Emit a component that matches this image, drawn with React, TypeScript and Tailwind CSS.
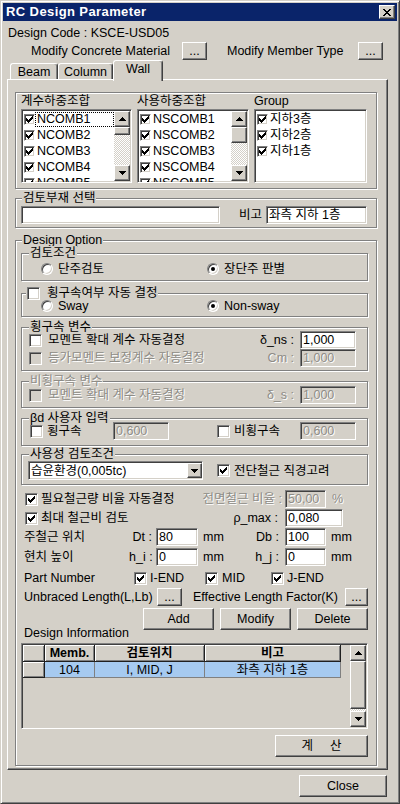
import React from "react";

const RAISED =
  "bg-[#d4d0c8] border border-t-white border-l-white border-b-[#404040] border-r-[#404040] shadow-[inset_-1px_-1px_0_#808080]";
const SUNK =
  "border border-t-[#808080] border-l-[#808080] border-b-white border-r-white shadow-[inset_1px_1px_0_#404040,inset_-1px_-1px_0_#d4d0c8]";
const GROUP =
  "relative border border-[#808080] shadow-[inset_1px_1px_0_#fff,1px_1px_0_#fff]";
const DIS = "text-[#8e8c86] [text-shadow:1px_1px_0_#fff]";
const DITHER =
  "bg-[repeating-conic-gradient(#ffffff_0_25%,#d4d0c8_0_50%)] bg-[length:2px_2px]";

const TOPS = [5, 6, 7, 6, 5, 4, 3];

function Check({ on = false, dis = false, small = false }: { on?: boolean; dis?: boolean; small?: boolean }) {
  return (
    <span
      className={`relative block shrink-0 ${small ? "w-[11px] h-[11px]" : "w-[13px] h-[13px]"} ${SUNK} ${
        dis ? "bg-[#d4d0c8]" : "bg-white"
      }`}
    >
      {on && (
        <svg
          className="absolute left-0 top-0"
          width={small ? 9 : 11}
          height={small ? 9 : 11}
          shapeRendering="crispEdges"
        >
          {TOPS.map((t, i) => (
            <rect
              key={i}
              x={small ? 1 + i : 2 + i}
              y={small ? t - 2 : t - 1}
              width={1}
              height={3}
              fill={dis ? "#808080" : "#000"}
            />
          ))}
        </svg>
      )}
    </span>
  );
}

function Radio({ on = false }: { on?: boolean }) {
  return (
    <span
      className={`flex items-center justify-center shrink-0 w-[12px] h-[12px] rounded-full bg-white ${SUNK}`}
    >
      {on && <span className="block w-[4px] h-[4px] rounded-full bg-black" />}
    </span>
  );
}

function Arrow({ dir }: { dir: "up" | "down" }) {
  const rows: [number, number][] =
    dir === "down"
      ? [
          [0, 7],
          [1, 5],
          [2, 3],
          [3, 1],
        ]
      : [
          [0, 1],
          [1, 3],
          [2, 5],
          [3, 7],
        ];
  return (
    <svg width="7" height="4" viewBox="0 0 7 4" shapeRendering="crispEdges">
      {rows.map(([y, w]) => (
        <rect key={y} x={(7 - w) / 2} y={y} width={w} height={1} fill="#000" />
      ))}
    </svg>
  );
}

function SBtn({ dir }: { dir: "up" | "down" }) {
  return (
    <div className={`w-[16px] h-[16px] shrink-0 flex items-center justify-center ${RAISED}`}>
      <Arrow dir={dir} />
    </div>
  );
}

function Field({ w, v = "", dis = false }: { w: string; v?: string; dis?: boolean }) {
  return (
    <div
      className={`${w} h-[18px] shrink-0 ${SUNK} ${
        dis ? "bg-[#d4d0c8]" : "bg-white"
      } flex items-center pl-[2px] overflow-hidden whitespace-nowrap`}
    >
      <span className={dis ? DIS : ""}>{v}</span>
    </div>
  );
}

function GL({ left, children, dis = false }: { left: string; children: React.ReactNode; dis?: boolean }) {
  return (
    <span
      className={`absolute top-[-8px] ${left} px-[1px] bg-[#d4d0c8] h-[14px] leading-[14px] whitespace-nowrap flex items-center ${
        dis ? DIS : ""
      }`}
    >
      {children}
    </span>
  );
}

function ListBox({
  w,
  items,
  thumb,
  focus = false,
}: {
  w: string;
  items: string[];
  thumb?: string;
  focus?: boolean;
}) {
  return (
    <div className={`${w} h-[74px] ${SUNK} bg-white flex overflow-hidden`}>
      <div className="flex-1 min-w-0 pt-[1px] pl-[2px] flex flex-col overflow-hidden">
        {items.map((t, i) => (
          <div key={i} className="h-[16px] shrink-0 flex items-center">
            <Check on small />
            <span
              className={`ml-[0px] pl-[1px] h-[15px] flex-1 flex items-center whitespace-nowrap ${
                focus && i === 0 ? "border border-dotted border-black" : "border border-transparent"
              }`}
            >
              {t}
            </span>
          </div>
        ))}
      </div>
      {thumb && (
        <div className="w-[17px] shrink-0 flex flex-col pt-[1px] pb-[1px] pr-[1px]">
          <SBtn dir="up" />
          <div className={`${thumb} w-[16px] shrink-0 ${RAISED}`} />
          <div className={`flex-1 ${DITHER}`} />
          <SBtn dir="down" />
        </div>
      )}
    </div>
  );
}

function HC({ w, children }: { w: string; children?: React.ReactNode }) {
  return (
    <div
      className={`${w} h-full shrink-0 flex items-center justify-center font-bold bg-[#d4d0c8] border-r border-b border-[#202020] shadow-[inset_1px_1px_0_#fff,inset_-1px_-1px_0_#808080]`}
    >
      {children}
    </div>
  );
}

function DC({ w, children }: { w: string; children?: React.ReactNode }) {
  return (
    <div
      className={`${w} h-full shrink-0 flex items-center justify-center bg-[#a6caf0] border-r border-b border-[#808080] whitespace-nowrap`}
    >
      {children}
    </div>
  );
}

export default function App() {
  return (
    <div className="w-[400px] h-[804px] bg-[#d4d0c8] font-['Liberation_Sans','Noto_Sans_CJK_KR',sans-serif] text-[12.5px] leading-[14px] text-black select-none">
      <div className="w-[400px] h-[804px] border border-t-[#d4d0c8] border-l-[#d4d0c8] border-b-[#404040] border-r-[#404040] shadow-[inset_1px_1px_0_#fff,inset_-1px_-1px_0_#808080] p-[2px] flex flex-col">
        {/* title bar */}
        <div className="h-[18px] shrink-0 bg-[#0a246a] flex items-center justify-between pl-[3px] pr-[2px]">
          <span className="text-white font-bold text-[13px] tracking-[0.4px]">RC Design Parameter</span>
          <div className={`w-[16px] h-[14px] ${RAISED} flex items-center justify-center`}>
            <svg width="8" height="7" viewBox="0 0 8 7" shapeRendering="crispEdges">
              <rect x="0" y="0" width="2" height="1" />
              <rect x="6" y="0" width="2" height="1" />
              <rect x="1" y="1" width="2" height="1" />
              <rect x="5" y="1" width="2" height="1" />
              <rect x="2" y="2" width="4" height="1" />
              <rect x="3" y="3" width="2" height="1" />
              <rect x="2" y="4" width="4" height="1" />
              <rect x="1" y="5" width="2" height="1" />
              <rect x="5" y="5" width="2" height="1" />
              <rect x="0" y="6" width="2" height="1" />
              <rect x="6" y="6" width="2" height="1" />
            </svg>
          </div>
        </div>

        {/* design code */}
        <div className="mt-[5px] ml-[5px] h-[14px] whitespace-nowrap">Design Code : KSCE-USD05</div>

        {/* modify row */}
        <div className="mt-[2px] h-[18px] flex items-center whitespace-nowrap">
          <span className="ml-[28px] w-[151px]">Modify Concrete Material</span>
          <div className={`w-[25px] h-[18px] ${RAISED} flex items-center justify-center`}>...</div>
          <span className="ml-[20px] w-[131px]">Modify Member Type</span>
          <div className={`w-[25px] h-[18px] ${RAISED} flex items-center justify-center`}>...</div>
        </div>

        {/* tabs */}
        <div className="h-[19px] flex items-end pl-[7px] relative z-10">
          <div className="w-[48px] h-[16px] bg-[#d4d0c8] border-t border-l border-r border-t-white border-l-white border-r-[#404040] shadow-[inset_-1px_0_0_#808080] rounded-t-[3px] flex items-center justify-center">
            Beam
          </div>
          <div className="w-[55px] h-[16px] bg-[#d4d0c8] border-t border-l border-r border-t-white border-l-white border-r-[#404040] shadow-[inset_-1px_0_0_#808080] rounded-t-[3px] flex items-center justify-center">
            Column
          </div>
          <div className="w-[50px] h-[21px] mb-[-2px] bg-[#d4d0c8] border-t border-l border-r border-t-white border-l-white border-r-[#404040] shadow-[inset_-1px_0_0_#808080] rounded-t-[3px] flex justify-center pt-[1px]">
            Wall
          </div>
        </div>

        {/* panel */}
        <div className="ml-[4px] w-[381px] h-[691px] shrink-0 border border-t-white border-l-white border-b-[#404040] border-r-[#404040] shadow-[inset_-1px_-1px_0_#808080] flex flex-col">
          {/* lists group */}
          <div className={`${GROUP} ml-[7px] mt-[12px] w-[362px] h-[97px] shrink-0`}>
            <div className="flex pl-[5px] pt-[1px] gap-[5px]">
              <div className="flex flex-col">
                <div className="h-[14px]">계수하중조합</div>
                <div className="mt-[1px]">
                  <ListBox
                    w="w-[111px]"
                    items={["NCOMB1", "NCOMB2", "NCOMB3", "NCOMB4", "NCOMB5"]}
                    thumb="h-[8px]"
                    focus
                  />
                </div>
              </div>
              <div className="flex flex-col">
                <div className="h-[14px]">사용하중조합</div>
                <div className="mt-[1px]">
                  <ListBox
                    w="w-[112px]"
                    items={["NSCOMB1", "NSCOMB2", "NSCOMB3", "NSCOMB4", "NSCOMB5"]}
                    thumb="h-[16px]"
                  />
                </div>
              </div>
              <div className="flex flex-col">
                <div className="h-[14px]">Group</div>
                <div className="mt-[1px]">
                  <ListBox w="w-[113px]" items={["지하3층", "지하2층", "지하1층"]} />
                </div>
              </div>
            </div>
          </div>

          {/* 검토부재 선택 */}
          <div className={`${GROUP} ml-[7px] mt-[9px] w-[362px] h-[30px] shrink-0`}>
            <GL left="left-[6px]">검토부재 선택</GL>
            <div className="flex items-center pl-[5px] pt-[7px]">
              <Field w="w-[199px]" />
              <span className="ml-[19px] w-[27px]">비고</span>
              <Field w="w-[101px]" v="좌측 지하 1층" />
            </div>
          </div>

          {/* Design Option */}
          <div className={`${GROUP} ml-[7px] mt-[12px] w-[362px] h-[526px] shrink-0 flex flex-col`}>
            <GL left="left-[6px]">Design Option</GL>

            {/* 검토조건 */}
            <div className={`${GROUP} ml-[5px] mt-[12px] w-[347px] h-[28px] shrink-0`}>
              <GL left="left-[7px]">검토조건</GL>
              <div className="flex items-center h-[14px] mt-[8px] pl-[19px]">
                <div className="w-[166px] flex items-center gap-[5px]">
                  <Radio />
                  <span>단주검토</span>
                </div>
                <div className="flex items-center gap-[5px]">
                  <Radio on />
                  <span>장단주 판별</span>
                </div>
              </div>
            </div>

            {/* 횡구속여부 자동 결정 */}
            <div className={`${GROUP} ml-[5px] mt-[12px] w-[347px] h-[24px] shrink-0`}>
              <GL left="left-[4px]">
                <span className="flex items-center gap-[7px]">
                  <Check />
                  <span>횡구속여부 자동 결정</span>
                </span>
              </GL>
              <div className="flex items-center h-[14px] mt-[5px] pl-[19px]">
                <div className="w-[166px] flex items-center gap-[5px]">
                  <Radio />
                  <span>Sway</span>
                </div>
                <div className="flex items-center gap-[5px]">
                  <Radio on />
                  <span>Non-sway</span>
                </div>
              </div>
            </div>

            {/* 횡구속 변수 */}
            <div className={`${GROUP} ml-[5px] mt-[10px] w-[347px] h-[44px] shrink-0`}>
              <GL left="left-[7px]">횡구속 변수</GL>
              <div className="pt-[3px]">
                <div className="flex items-center h-[18px] pl-[7px]">
                  <div className="w-[265px] flex items-center justify-between whitespace-nowrap">
                    <div className="flex items-center gap-[6px]">
                      <Check />
                      <span>모멘트 확대 계수 자동결정</span>
                    </div>
                    <span>δ_ns :</span>
                  </div>
                  <div className="ml-[6px]">
                    <Field w="w-[56px]" v="1,000" />
                  </div>
                </div>
                <div className="flex items-center h-[18px] pl-[7px]">
                  <div className="w-[265px] flex items-center justify-between whitespace-nowrap">
                    <div className="flex items-center gap-[6px]">
                      <Check dis />
                      <span className={DIS}>등가모멘트 보정계수 자동결정</span>
                    </div>
                    <span className={DIS}>Cm :</span>
                  </div>
                  <div className="ml-[6px]">
                    <Field w="w-[56px]" v="1,000" dis />
                  </div>
                </div>
              </div>
            </div>

            {/* 비횡구속 변수 */}
            <div className={`${GROUP} ml-[5px] mt-[10px] w-[347px] h-[27px] shrink-0`}>
              <GL left="left-[7px]" dis>
                비횡구속 변수
              </GL>
              <div className="pt-[4px]">
                <div className="flex items-center h-[18px] pl-[7px]">
                  <div className="w-[265px] flex items-center justify-between whitespace-nowrap">
                    <div className="flex items-center gap-[6px]">
                      <Check dis />
                      <span className={DIS}>모멘트 확대 계수 자동결정</span>
                    </div>
                    <span className={DIS}>δ_s :</span>
                  </div>
                  <div className="ml-[6px]">
                    <Field w="w-[56px]" v="1,000" dis />
                  </div>
                </div>
              </div>
            </div>

            {/* βd 사용자 입력 */}
            <div className={`${GROUP} ml-[5px] mt-[10px] w-[347px] h-[28px] shrink-0`}>
              <GL left="left-[7px]">βd 사용자 입력</GL>
              <div className="pt-[3px]">
                <div className="flex items-center h-[18px] pl-[8px]">
                  <div className="w-[83px] flex items-center gap-[4px]">
                    <Check />
                    <span>횡구속</span>
                  </div>
                  <Field w="w-[56px]" v="0,600" dis />
                  <div className="ml-[48px] w-[83px] flex items-center gap-[4px]">
                    <Check />
                    <span>비횡구속</span>
                  </div>
                  <Field w="w-[56px]" v="0,600" dis />
                </div>
              </div>
            </div>

            {/* 사용성 검토조건 */}
            <div className={`${GROUP} ml-[5px] mt-[8px] w-[347px] h-[31px] shrink-0`}>
              <GL left="left-[7px]">사용성 검토조건</GL>
              <div className="flex items-center pt-[6px] pl-[6px]">
                <div className={`w-[175px] h-[19px] ${SUNK} bg-white flex items-center`}>
                  <span className="flex-1 pl-[2px] whitespace-nowrap">습윤환경(0,005tc)</span>
                  <div className={`w-[15px] h-[15px] ${RAISED} flex items-center justify-center`}>
                    <Arrow dir="down" />
                  </div>
                </div>
                <div className="ml-[14px] flex items-center gap-[4px]">
                  <Check on />
                  <span>전단철근 직경고려</span>
                </div>
              </div>
            </div>

            {/* 필요철근량 */}
            <div className="flex items-center h-[18px] mt-[5px] pl-[9px] shrink-0">
              <div className="w-[260px] pr-[3px] flex items-center justify-between whitespace-nowrap">
                <div className="flex items-center gap-[3px]">
                  <Check on />
                  <span>필요철근량 비율 자동결정</span>
                </div>
                <span className={DIS}>전면철근 비율 :</span>
              </div>
              <Field w="w-[41px]" v="50,00" dis />
              <span className={`ml-[6px] ${DIS}`}>%</span>
            </div>

            {/* 최대 철근비 */}
            <div className="flex items-center h-[18px] mt-[1px] pl-[9px] shrink-0">
              <div className="w-[260px] pr-[7px] flex items-center justify-between whitespace-nowrap">
                <div className="flex items-center gap-[3px]">
                  <Check on />
                  <span>최대 철근비 검토</span>
                </div>
                <span>ρ_max :</span>
              </div>
              <Field w="w-[58px]" v="0,080" />
            </div>

            {/* 주철근 위치 */}
            <div className="flex items-center h-[18px] mt-[1px] pl-[8px] shrink-0 whitespace-nowrap">
              <span className="w-[105px]">주철근 위치</span>
              <span className="w-[27px] text-right pr-[4px]">Dt :</span>
              <Field w="w-[42px]" v="80" />
              <span className="w-[54px] pl-[5px]">mm</span>
              <span className="w-[33px] text-right pr-[6px]">Db :</span>
              <Field w="w-[41px]" v="100" />
              <span className="pl-[5px]">mm</span>
            </div>

            {/* 현치 높이 */}
            <div className="flex items-center h-[18px] mt-[2px] pl-[8px] shrink-0 whitespace-nowrap">
              <span className="w-[105px]">현치 높이</span>
              <span className="w-[27px] text-right pr-[4px]">h_i :</span>
              <Field w="w-[42px]" v="0" />
              <span className="w-[54px] pl-[5px]">mm</span>
              <span className="w-[33px] text-right pr-[6px]">h_j :</span>
              <Field w="w-[41px]" v="0" />
              <span className="pl-[5px]">mm</span>
            </div>

            {/* Part Number */}
            <div className="flex items-center h-[16px] mt-[4px] pl-[8px] shrink-0 whitespace-nowrap">
              <span className="w-[110px]">Part Number</span>
              <div className="w-[71px] flex items-center gap-[3px]">
                <Check on />
                <span>I-END</span>
              </div>
              <div className="w-[66px] flex items-center gap-[4px]">
                <Check on />
                <span>MID</span>
              </div>
              <div className="flex items-center gap-[3px]">
                <Check on />
                <span>J-END</span>
              </div>
            </div>

            {/* Unbraced */}
            <div className="flex items-center h-[18px] mt-[2px] pl-[8px] shrink-0 whitespace-nowrap">
              <span className="w-[133px]">Unbraced Length(L,Lb)</span>
              <div className={`w-[25px] h-[18px] ${RAISED} flex items-center justify-center`}>...</div>
              <span className="ml-[11px] w-[152px]">Effective Length Factor(K)</span>
              <div className={`w-[23px] h-[18px] ${RAISED} flex items-center justify-center`}>...</div>
            </div>

            {/* Add Modify Delete */}
            <div className="flex items-center h-[22px] mt-[2px] ml-[127px] gap-[6px] shrink-0">
              <div className={`w-[71px] h-[22px] ${RAISED} flex items-center justify-center`}>Add</div>
              <div className={`w-[71px] h-[22px] ${RAISED} flex items-center justify-center`}>Modify</div>
              <div className={`w-[71px] h-[22px] ${RAISED} flex items-center justify-center`}>Delete</div>
            </div>

            <div className="h-[14px] -mt-[4px] pl-[8px] shrink-0 w-[120px] whitespace-nowrap">Design Information</div>

            {/* grid */}
            <div className={`ml-[5px] mt-[3px] w-[347px] h-[86px] shrink-0 ${SUNK} bg-[#d4d0c8] flex`}>
              <div className="flex-1 pl-[1px] pt-[1px]">
                <div className="flex h-[17px]">
                  <HC w="w-[22px]" />
                  <HC w="w-[50px]">Memb.</HC>
                  <HC w="w-[110px]">검토위치</HC>
                  <HC w="w-[136px]">비고</HC>
                </div>
                <div className="flex h-[16px]">
                  <div className="w-[22px] h-full shrink-0 bg-[#d4d0c8] border-r border-b border-[#202020] shadow-[inset_1px_1px_0_#fff,inset_-1px_-1px_0_#808080]" />
                  <DC w="w-[50px]">104</DC>
                  <DC w="w-[110px]">I, MID, J</DC>
                  <DC w="w-[136px]">좌측 지하 1층</DC>
                </div>
              </div>
              <div className="w-[17px] shrink-0 flex flex-col pt-[1px] pb-[1px] pr-[1px]">
                <SBtn dir="up" />
                <div className={`h-[48px] w-[16px] shrink-0 ${RAISED}`} />
                <div className={`flex-1 ${DITHER}`} />
                <SBtn dir="down" />
              </div>
            </div>

            {/* 계산 */}
            <div className={`ml-[259px] mt-[6px] w-[93px] h-[22px] shrink-0 ${RAISED} flex items-center justify-center gap-[17px]`}>
              <span>계</span>
              <span>산</span>
            </div>
          </div>
        </div>

        {/* close */}
        <div className={`mt-[5px] ml-[296px] w-[88px] h-[22px] shrink-0 ${RAISED} flex items-center justify-center`}>
          Close
        </div>
      </div>
    </div>
  );
}
